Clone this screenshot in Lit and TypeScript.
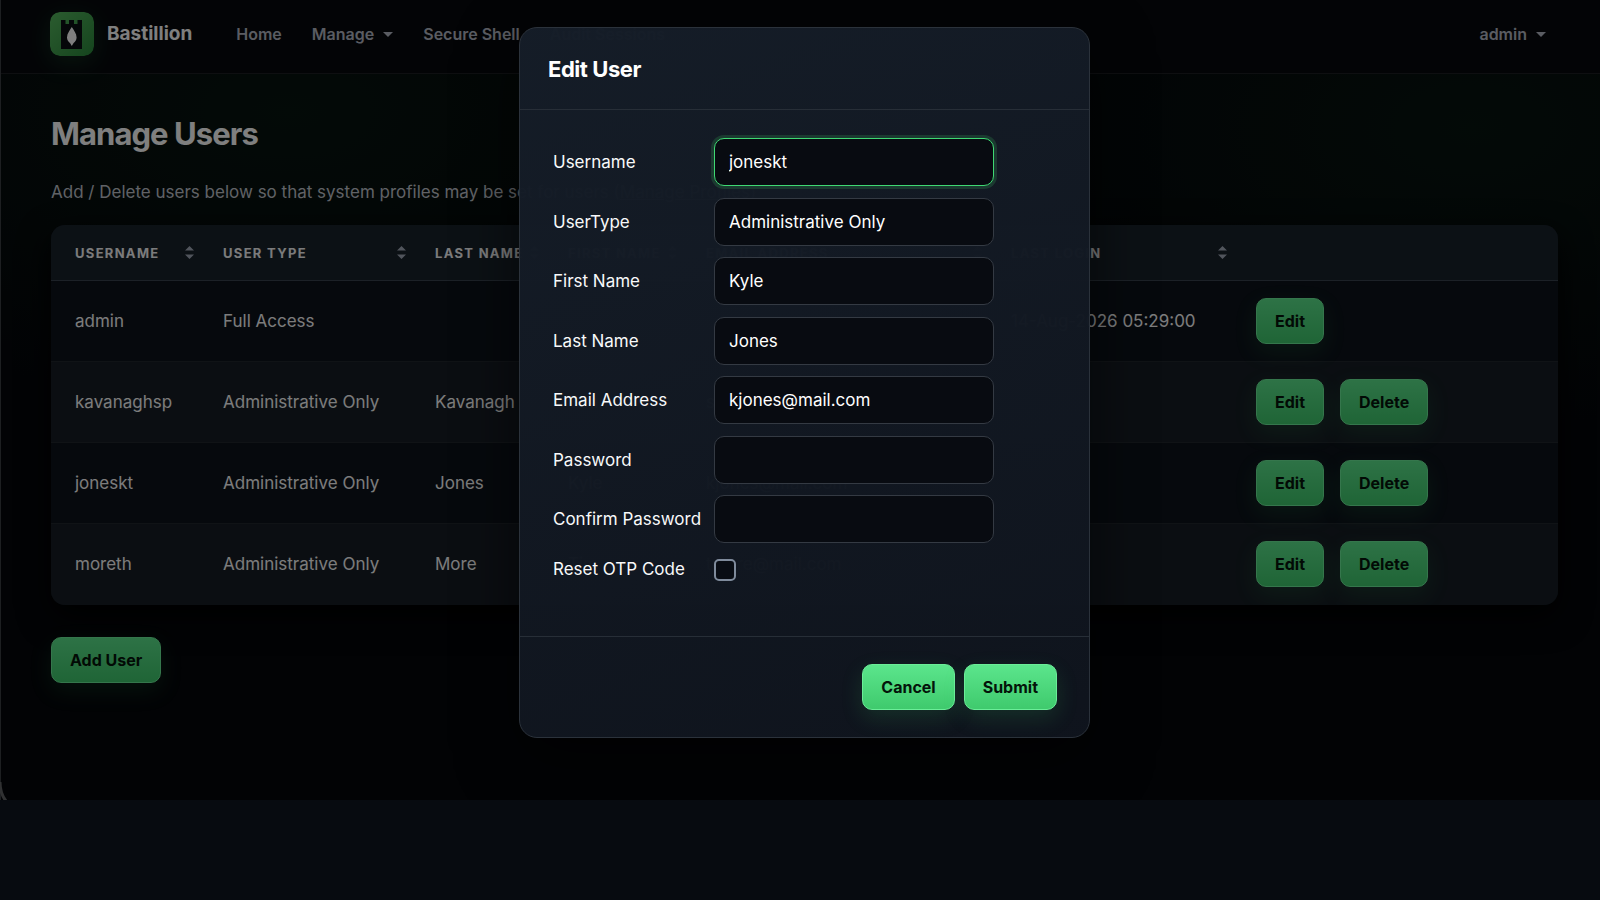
import { LitElement, html, css } from "lit";
import { customElement } from "lit/decorators.js";

interface User {
  username: string;
  type: string;
  last: string;
  first: string;
  email: string;
  login: string;
}

const USERS: User[] = [
  { username: "admin", type: "Full Access", last: "", first: "", email: "", login: "14-Aug-2026 05:29:00" },
  { username: "kavanaghsp", type: "Administrative Only", last: "Kavanagh", first: "Sean", email: "skavanagh@mail.com", login: "" },
  { username: "joneskt", type: "Administrative Only", last: "Jones", first: "Kyle", email: "kjones@mail.com", login: "" },
  { username: "moreth", type: "Administrative Only", last: "More", first: "Tim", email: "tmore@mail.com", login: "" },
];

const HEADS = ["Username", "User Type", "Last Name", "First Name", "Email Address", "Last Login"];

@customElement("app-root")
export class AppRoot extends LitElement {
  static styles = css`
    :host {
      display: grid;
      grid-template-rows: 1fr 100px;
      min-height: 100vh;
      background: #070b10;
      color: #fff;
      font: 17px/28px Inter, "Liberation Sans", sans-serif;
    }
    * { box-sizing: border-box; }
    a { color: inherit; text-decoration: none; }
    .shell {
      position: relative;
      display: flex;
      flex-direction: column;
      overflow: hidden;
      background:
        radial-gradient(ellipse 560px 300px at 18% 14%, #07140f, transparent),
        radial-gradient(ellipse 520px 300px at 92% 16%, #07140f, transparent),
        #04060a;
    }
    .nav {
      display: flex;
      align-items: center;
      gap: 30px;
      height: 74px;
      padding: 0 54px 5px 50px;
      background: #07090d;
      border-bottom: 1px solid #1c1f22;
      font-size: 16px;
      font-weight: 600;
      color: #b4b9c4;
    }
    .brand {
      display: flex;
      align-items: center;
      gap: 13px;
      margin-right: 14px;
      font-size: 19px;
      font-weight: 700;
      color: #fff;
    }
    .logo { border-radius: 10px; box-shadow: 0 6px 24px rgba(50, 180, 90, 0.2); display: block; }
    .drop { display: flex; align-items: center; gap: 9px; }
    .drop::after {
      content: "";
      border: 5px solid transparent;
      border-top-color: currentColor;
      border-bottom: 0;
    }
    .account { margin-left: auto; }
    .main { padding: 38px 42px 0 51px; }
    h1 { margin: 0; font-size: 31px; line-height: 44px; font-weight: 700; color: #fff; letter-spacing: -0.03em; }
    .lead { margin: 23px 0 19px; line-height: 27px; color: #c0c4cc; }
    .lead a { text-decoration: underline; }
    .card { border-radius: 14px; overflow: hidden; background: #0c121a; box-shadow: 0 12px 32px #000; }
    table { width: 100%; border-collapse: separate; border-spacing: 0; table-layout: fixed; }
    .c1 { width: 148px; }
    .c2 { width: 212px; }
    .c3 { width: 133px; }
    .c4 { width: 138px; }
    .c5 { width: 305px; }
    .c6 { width: 245px; }
    th {
      height: 56px;
      padding: 0 5px 0 24px;
      background: #19222b;
      border-bottom: 1px solid #38424e;
      color: #f6f7f8;
      font-size: 13px;
      font-weight: 700;
      text-align: left;
      text-transform: uppercase;
      letter-spacing: 0.1em;
      white-space: nowrap;
    }
    .sort { display: flex; align-items: center; justify-content: space-between; }
    td { height: 81px; padding: 0 0 0 24px; color: #f8f8f9; border-bottom: 1px solid #20262c; white-space: nowrap; }
    tr:nth-child(even) td { background: #161d24; }
    tr:last-child td { border-bottom-color: transparent; }
    .actions { display: flex; gap: 16px; }
    .btn {
      height: 46px;
      padding: 0 18px;
      border: 1px solid #6bed98;
      border-radius: 10px;
      background: linear-gradient(#5be58c, #3fca6d);
      box-shadow: 0 8px 22px rgba(60, 210, 110, 0.15);
      color: #04140a;
      font: 700 16px/28px Inter, "Liberation Sans", sans-serif;
    }
    .add { margin-top: 32px; }
    .backdrop { position: absolute; inset: 0; background: rgba(0, 0, 0, 0.5); border-left: 1px solid #1d1f21; }
    .corner { position: absolute; left: 0; bottom: 0; }
    .modal {
      position: absolute;
      top: 27px;
      left: 519px;
      width: 571px;
      border: 1px solid #2b323b;
      border-radius: 18px;
      background: linear-gradient(160deg, rgba(21, 29, 40, 0.98), rgba(15, 20, 29, 0.98));
      box-shadow: 0 20px 60px rgba(0, 0, 0, 0.6);
    }
    .head { height: 82px; padding: 26px 28px 0; border-bottom: 1px solid #272e37; }
    h2 { margin: 0; font-size: 22px; line-height: 30px; font-weight: 700; letter-spacing: -0.02em; }
    .form {
      display: grid;
      grid-template-columns: 150px 280px;
      column-gap: 11px;
      align-content: space-between;
      align-items: center;
      min-height: 526px;
      padding: 28px 33px 53px;
      color: #f8f9fa;
      white-space: nowrap;
    }
    .field {
      width: 100%;
      height: 48px;
      padding: 0 14px;
      border: 1px solid #343a43;
      border-radius: 10px;
      outline: 0;
      appearance: none;
      background: #080b11;
      color: #fff;
      font: 17px/28px Inter, "Liberation Sans", sans-serif;
    }
    .focused { border-color: #3fd873; box-shadow: 0 0 0 3px #1b3a30; }
    .check {
      width: 22px;
      height: 22px;
      margin: 2px 0 0;
      border: 2px solid #7f8b9c;
      border-radius: 5px;
      appearance: none;
      background: #090d14;
    }
    .foot { display: flex; justify-content: flex-end; gap: 9px; padding: 27px 32px; border-top: 1px solid #272e37; }
  `;

  private sortIcon() {
    return html`<svg width="9" height="13" viewBox="0 0 9 13" fill="#a3abb8" aria-hidden="true">
      <path d="M4.500 0 9 4.500H0zM4.500 13 0 8.500h9z" />
    </svg>`;
  }

  private row(u: User) {
    return html`<tr>
      <td>${u.username}</td>
      <td>${u.type}</td>
      <td>${u.last}</td>
      <td>${u.first}</td>
      <td>${u.email}</td>
      <td>${u.login}</td>
      <td>
        <div class="actions">
          <button class="btn">Edit</button>
          ${u.username === "admin" ? "" : html`<button class="btn">Delete</button>`}
        </div>
      </td>
    </tr>`;
  }

  private field(id: string, label: string, value: string, type = "text") {
    return html`<label for=${id}>${label}</label>
      <input class="field ${id === "username" ? "focused" : ""}" id=${id} type=${type} .value=${value} />`;
  }

  render() {
    return html`
      <div class="shell">
        <nav class="nav">
          <a class="brand" href="#">
            <svg class="logo" width="44" height="44" viewBox="0 0 44 44" aria-hidden="true">
              <defs>
                <linearGradient id="g" x1="0" y1="0" x2="1" y2="1">
                  <stop offset="0" stop-color="#57b85f" />
                  <stop offset="1" stop-color="#2a8a3c" />
                </linearGradient>
              </defs>
              <rect width="44" height="44" rx="9" fill="url(#g)" />
              <path d="M11 8h4.500v4H19V8h5v4h3.500V8H32v29H11z" fill="#0b0f12" />
              <path d="M21.800 15c-1.800 3-4.800 6.500-4.800 10.500 0 2.500 1.500 4.500 3 5.500l1.800 3 1.800-3c1.500-1 3-3 3-5.500 0-4-3-7.500-4.800-10.500z" fill="#fff" />
            </svg>
            Bastillion
          </a>
          <a href="#">Home</a>
          <a class="drop" href="#">Manage</a>
          <a href="#">Secure Shell</a>
          <a href="#">Audit Sessions</a>
          <a class="drop account" href="#">admin</a>
        </nav>
        <main class="main">
          <h1>Manage Users</h1>
          <p class="lead">
            Add / Delete users below so that system profiles may be set for users (<a href="#">Manage Profiles</a>)
          </p>
          <div class="card">
            <table>
              <colgroup>
                <col class="c1" /><col class="c2" /><col class="c3" /><col class="c4" /><col class="c5" /><col class="c6" /><col />
              </colgroup>
              <thead>
                <tr>
                  ${HEADS.map((label) => html`<th scope="col"><div class="sort">${label}${this.sortIcon()}</div></th>`)}
                  <th></th>
                </tr>
              </thead>
              <tbody>
                ${USERS.map((u) => this.row(u))}
              </tbody>
            </table>
          </div>
          <button class="btn add">Add User</button>
        </main>
        <div class="backdrop"></div>
        <svg class="corner" width="10" height="18" viewBox="0 0 10 18" fill="none" stroke="#303132" stroke-width="3" aria-hidden="true">
          <path d="M0 0C0 8 2 14 6 19" />
        </svg>
        <form class="modal" role="dialog" aria-labelledby="title">
          <div class="head"><h2 id="title">Edit User</h2></div>
          <div class="form">
            ${this.field("username", "Username", "joneskt")}
            <label for="type">UserType</label>
            <select class="field" id="type">
              <option>Administrative Only</option>
              <option>Full Access</option>
            </select>
            ${this.field("first", "First Name", "Kyle")}
            ${this.field("last", "Last Name", "Jones")}
            ${this.field("email", "Email Address", "kjones@mail.com")}
            ${this.field("password", "Password", "", "password")}
            ${this.field("confirm", "Confirm Password", "", "password")}
            <label for="otp">Reset OTP Code</label>
            <input class="check" id="otp" type="checkbox" />
          </div>
          <div class="foot">
            <button class="btn" type="button">Cancel</button>
            <button class="btn" type="button">Submit</button>
          </div>
        </form>
      </div>
      <div></div>
    `;
  }
}
